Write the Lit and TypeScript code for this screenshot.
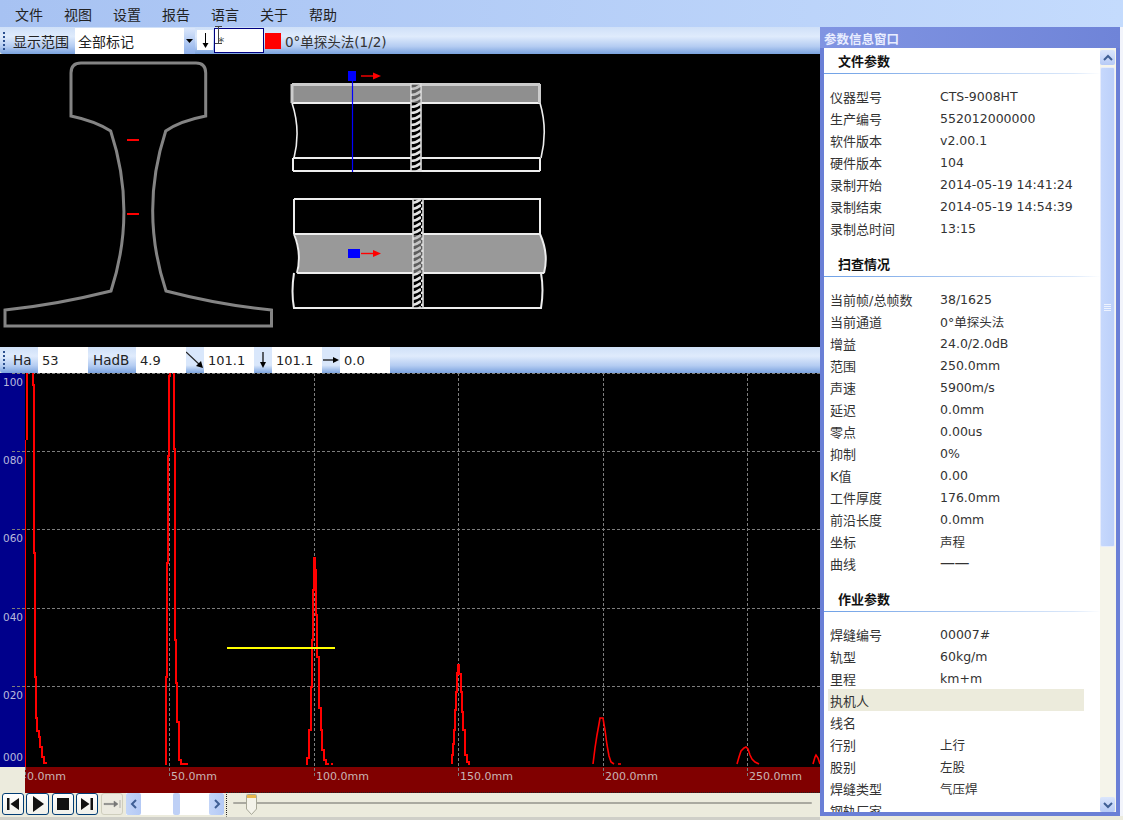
import { css, html, LitElement, svg } from "lit";
import { customElement } from "lit/decorators.js";

type Row = [string, string] | [string, string, boolean];

const MENU = ["文件", "视图", "设置", "报告", "语言", "关于", "帮助"];

const SECTIONS: { title: string; rows: Row[] }[] = [
    {
        title: "文件参数",
        rows: [
            ["仪器型号", "CTS-9008HT"],
            ["生产编号", "552012000000"],
            ["软件版本", "v2.00.1"],
            ["硬件版本", "104"],
            ["录制开始", "2014-05-19 14:41:24"],
            ["录制结束", "2014-05-19 14:54:39"],
            ["录制总时间", "13:15"],
        ],
    },
    {
        title: "扫查情况",
        rows: [
            ["当前帧/总帧数", "38/1625"],
            ["当前通道", "0°单探头法"],
            ["增益", "24.0/2.0dB"],
            ["范围", "250.0mm"],
            ["声速", "5900m/s"],
            ["延迟", "0.0mm"],
            ["零点", "0.00us"],
            ["抑制", "0%"],
            ["K值", "0.00"],
            ["工件厚度", "176.0mm"],
            ["前沿长度", "0.0mm"],
            ["坐标", "声程"],
            ["曲线", "——"],
        ],
    },
    {
        title: "作业参数",
        rows: [
            ["焊缝编号", "00007#"],
            ["轨型", "60kg/m"],
            ["里程", "km+m"],
            ["执机人", "", true],
            ["线名", ""],
            ["行别", "上行"],
            ["股别", "左股"],
            ["焊缝类型", "气压焊"],
            ["钢轨厂家", ""],
        ],
    },
];

const GRID_Y = [373, 451, 529, 608, 686];
const GRID_X = [169, 314, 458, 603, 747];
const Y_LABELS: [string, number][] = [["100", 386], ["080", 464], ["060", 542], ["040", 621], ["020", 699], ["000", 761]];
const X_LABELS: [string, number][] = [["0.0mm", 27], ["50.0mm", 171], ["100.0mm", 316], ["150.0mm", 460], ["200.0mm", 605], ["250.0mm", 749]];

// echo traces, stepped like the device's pixel output
const STEPPED = [
    "M27 373 V440",
    "M33 373 V385 H34 V553 H35 V677 H36 V718 H37 V731 H39 V737 H40 V747 H42 V757 H44 V763 H47",
    "M170 373 V376 H169 V456 H168 V563 H167 V677 H166 V764 H165",
    "M174 373 V449 H175 V640 H176 V683 H177 V722 H179 V760 H181 V764 H188",
    "M314 557 V590 H313 V640 H312 V687 H311 V730 H309 V758 H307 V764 H306",
    "M315 557 V570 H316 V615 H317 V657 H319 V708 H321 V730 H322 V750 H324 V760 H326 V764 H329 M331 764 H333",
    "M458 664 V673 H457 V692 H456 V710 H455 V730 H454 V744 H453 V755 H452 V764",
    "M459 664 V674 H461 V692 H462 V712 H463 V730 H465 V755 H467 V762 H469 V764 H470",
];
const SMOOTH = [
    "593,764 595,748 597,735 599,724 600,718 603,718 605,730 607,745 609,756 611,762 614,764",
    "618,764 621,764",
    "737,764 739,757 741,751 744,748 746,747 748,749 750,755 752,759 755,762 759,764",
    "813,764 815,757 816,755 818,758 820,764",
];

@customElement("app-root")
export class AppRoot extends LitElement {
    private renderPane() {
        return html`
            <svg class="pane" width="820" height="293" viewBox="0 54 820 293">
                <defs>
                    <pattern id="weld" width="10" height="6" patternUnits="userSpaceOnUse" patternTransform="translate(411 84)">
                        <rect width="10" height="6" fill="#000"></rect>
                        <path d="M0 5 Q5 5 10 1" fill="none" stroke="#e4e4e4" stroke-width="2.6"></path>
                    </pattern>
                </defs>
                <path d="M71 116 V73 Q71 63 81 63 H196 Q205.7 63 205.7 73 V116 Q180 121 165.7 131 Q139.5 211 166 291 Q220 305 271.5 310 V326 H5 V310 Q55 305 111 291 Q137 211 110.7 131 Q95 121 71 116 Z" fill="none" stroke="#848484" stroke-width="3"></path>
                <path d="M127 140 H139 M127 214 H139" stroke="#f00" stroke-width="2"></path>

                <rect x="293" y="85" width="246" height="18" fill="#8f8f8f"></rect>
                <path d="M292 103 Q301 130 294 158 M540 103 Q548 130 541 158" fill="none" stroke="#eee" stroke-width="1.6"></path>
                <path d="M292 103 H540 M293 158 H540 M293 171 H540 M293 158 V171 M540 158 V171" fill="none" stroke="#eee" stroke-width="2"></path>
                <path d="M292 84.5 H540 M292 84 V103 M539.5 84 V103" fill="none" stroke="#ccc" stroke-width="3"></path>
                <rect x="411" y="84" width="10" height="87" fill="url(#weld)" stroke="#ddd" stroke-width="1.6"></rect>
                <rect x="412" y="85" width="8" height="18" fill="#aaa" opacity=".55"></rect>
                <rect x="348" y="71" width="8" height="10" fill="#00f"></rect>
                <path d="M352.5 81 V172" stroke="#00f" stroke-width="1.2"></path>
                <path d="M361 76 H375" stroke="#f00" stroke-width="1.4"></path>
                <path d="M373 72.5 L381 76 L373 79.5 Z" fill="#f00"></path>

                <path d="M295 234 Q302 254 298 273 H544 Q549 254 540 234 Z" fill="#999"></path>
                <path d="M294 199 H540 V234 M294 199 V234 M294 234 H541 M297 273 H544 M294 273 Q291 292 294 308 H541 Q544 290 541 273 M294 234 Q302 254 297 273 M540 234 Q549 254 544 273" fill="none" stroke="#eee" stroke-width="2"></path>
                <rect x="413" y="199" width="10" height="109" fill="url(#weld)" stroke="#ddd" stroke-width="1.6"></rect>
                <rect x="414" y="235" width="8" height="38" fill="#aaa" opacity=".55"></rect>
                <rect x="348" y="249" width="12" height="9" fill="#00f"></rect>
                <path d="M361 253.5 H375" stroke="#f00" stroke-width="1.4"></path>
                <path d="M373 250 L381 253.5 L373 257 Z" fill="#f00"></path>
            </svg>
        `;
    }

    private renderChart() {
        return html`
            <svg class="chart" width="820" height="420" viewBox="0 373 820 420">
                <rect x="0" y="373" width="820" height="394" fill="#000"></rect>
                <rect x="0" y="373" width="25" height="394" fill="#00008b"></rect>
                <rect x="0" y="767" width="25" height="26" fill="#ecebdd"></rect>
                <rect x="25" y="767" width="795" height="26" fill="#800000"></rect>
                ${GRID_Y.map((y) => svg`<line x1="12" x2="820" y1=${y + 0.5} y2=${y + 0.5} class="grid"></line>`)}
                ${GRID_X.map((x) => svg`<line x1=${x + 0.5} x2=${x + 0.5} y1="373" y2="778" class="grid"></line>`)}
                <line x1="25.5" x2="25.5" y1="767" y2="778" class="grid"></line>
                <line x1="25.5" x2="25.5" y1="440" y2="767" stroke="#f00"></line>
                ${STEPPED.map((d) => svg`<path d=${d} class="trace"></path>`)}
                ${SMOOTH.map((p) => svg`<polyline points=${p} class="soft"></polyline>`)}
                <line x1="227" x2="335" y1="648" y2="648" stroke="#ff0" stroke-width="2"></line>
                ${Y_LABELS.map(([t, y]) => svg`<text x="3" y=${y} class="ylabel">${t}</text>`)}
                ${X_LABELS.map(([t, x]) => svg`<text x=${x} y="780" class="xlabel">${t}</text>`)}
            </svg>
        `;
    }

    private renderPlayer() {
        return html`
            <div class="player">
                <button class="btn">
                    <svg width="14" height="14" viewBox="0 0 14 14"><path d="M1 1 H3.5 V13 H1 Z M13 1 V13 L4.5 7 Z"></path></svg>
                </button>
                <button class="btn wide">
                    <svg width="14" height="16" viewBox="0 0 14 16"><path d="M2 0 L13 8 L2 16 Z"></path></svg>
                </button>
                <button class="btn stop">
                    <svg width="12" height="12" viewBox="0 0 12 12"><rect width="12" height="12"></rect></svg>
                </button>
                <button class="btn">
                    <svg width="14" height="14" viewBox="0 0 14 14"><path d="M1 1 L9.5 7 L1 13 Z M10.5 1 H13 V13 H10.5 Z"></path></svg>
                </button>
                <button class="btn off">
                    <svg width="18" height="10" viewBox="0 0 18 10"><path d="M1 4.4 H11 V2 L15 5 L11 8 V5.6 H1 Z M17 1 V9" fill="#777" stroke="#777" stroke-width=".5"></path></svg>
                </button>
                <div class="hscroll">
                    <span class="arrow">
                        <svg width="8" height="10" viewBox="0 0 8 10"><path d="M6 1 L2 5 L6 9" fill="none" stroke="#3f5f95" stroke-width="2"></path></svg>
                    </span>
                    <span class="hthumb"></span>
                    <span class="arrow end">
                        <svg width="8" height="10" viewBox="0 0 8 10"><path d="M2 1 L6 5 L2 9" fill="none" stroke="#3f5f95" stroke-width="2"></path></svg>
                    </span>
                </div>
                <div class="track">
                    <div class="groove"></div>
                    <svg class="knob" width="11" height="21" viewBox="0 0 11 21">
                        <path d="M.5 1.5 Q.5 .5 1.5 .5 H9.5 Q10.5 .5 10.5 1.5 V15 L5.5 20.5 L.5 15 Z" fill="#f4f3ea" stroke="#a8a898"></path>
                        <path d="M1 1 H10 V4 H1 Z" fill="#e8b64c"></path>
                    </svg>
                </div>
            </div>
        `;
    }

    private renderPanel() {
        return html`
            <aside class="panel">
                <div class="title">参数信息窗口</div>
                <div class="body">
                    <div class="list">
                        ${SECTIONS.map((s) => html`
                            <div class="head">${s.title}</div>
                            <div class="rows">
                                ${s.rows.map((r) => html`
                                    <div class="row ${r[2] ? "hl" : ""}">
                                        <span class="key">${r[0]}</span><span class="${r[1] === "——" ? "dash" : ""}">${r[1]}</span>
                                    </div>
                                `)}
                            </div>
                        `)}
                    </div>
                    <div class="vscroll">
                        <span class="vbtn">
                            <svg width="10" height="8" viewBox="0 0 10 8"><path d="M1 6 L5 2 L9 6" fill="none" stroke="#3f5f95" stroke-width="2"></path></svg>
                        </span>
                        <span class="vthumb">
                            <i></i><i></i><i></i><i></i>
                        </span>
                        <span class="vrest"></span>
                        <span class="vbtn">
                            <svg width="10" height="8" viewBox="0 0 10 8"><path d="M1 2 L5 6 L9 2" fill="none" stroke="#3f5f95" stroke-width="2"></path></svg>
                        </span>
                    </div>
                </div>
            </aside>
        `;
    }

    render() {
        return html`
            <nav class="menu">${MENU.map((m) => html`<span>${m}</span>`)}</nav>
            <div class="main">
                <section class="left">
                    <div class="strip">
                        <span class="grip"></span>
                        <span class="cap">显示范围</span>
                        <div class="combo">
                            <span>全部标记</span>
                            <span class="drop"><svg width="7" height="4" viewBox="0 0 7 4"><path d="M0 0 H7 L3.5 4 Z"></path></svg></span>
                        </div>
                        <span class="icon-white">
                            <svg width="9" height="15" viewBox="0 0 9 15"><path d="M4.5 0 V10" stroke="#000"></path><path d="M1.5 10 H7.5 L4.5 15 Z"></path></svg>
                        </span>
                        <div class="mark">
                            <span>*</span>
                            <svg class="beam" width="7" height="18" viewBox="0 0 7 18"><path d="M0 .5 H7 M3.5 .5 V17.5 M0 17.5 H7" fill="none" stroke="#444" stroke-width="1"></path></svg>
                        </div>
                        <span class="swatch"></span>
                        <span class="channel">0°单探头法(1/2)</span>
                    </div>
                    ${this.renderPane()}
                    <div class="strip second">
                        <span class="grip"></span>
                        <span class="cap ha">Ha</span>
                        <span class="field">53</span>
                        <span class="cap hadb">HadB</span>
                        <span class="field">4.9</span>
                        <span class="tool">
                            <svg width="18" height="18" viewBox="0 0 18 18"><path d="M0 1 L15 15" stroke="#222" stroke-width="1.2"></path><path d="M10 15 L17 17 L15 10 Z"></path></svg>
                        </span>
                        <span class="field">101.1</span>
                        <span class="tool">
                            <svg width="10" height="16" viewBox="0 0 10 16"><path d="M5 0 V11" stroke="#000" stroke-width="1.2"></path><path d="M2 10 H8 L5 16 Z"></path></svg>
                        </span>
                        <span class="field">101.1</span>
                        <span class="tool">
                            <svg width="16" height="10" viewBox="0 0 16 10"><path d="M0 5 H11" stroke="#000" stroke-width="1.2"></path><path d="M10 2 V8 L16 5 Z"></path></svg>
                        </span>
                        <span class="field">0.0</span>
                    </div>
                    ${this.renderChart()}
                    ${this.renderPlayer()}
                    <div class="foot"></div>
                </section>
                ${this.renderPanel()}
                <div class="edge"></div>
            </div>
        `;
    }

    static styles = css`
        :host {
            display: block;
            width: 1123px;
            height: 820px;
            overflow: hidden;
            background: #ecebdd;
            color: #222;
            font-family: "DejaVu Sans", "Noto Sans CJK SC", sans-serif;
            font-size: 12.5px;
        }
        svg {
            display: block;
        }
        .menu {
            display: flex;
            align-items: center;
            gap: 21px;
            height: 27px;
            padding-left: 15px;
            box-sizing: border-box;
            background: linear-gradient(90deg, #a7c2f2, #c4dbfd);
            font-size: 14px;
            font-family: "Noto Sans CJK SC", sans-serif;
        }
        .main {
            display: flex;
            height: 793px;
        }
        .left {
            width: 820px;
            display: flex;
            flex-direction: column;
            flex: none;
        }
        .strip {
            position: relative;
            display: flex;
            align-items: stretch;
            height: 27px;
            box-sizing: border-box;
            padding: 1px 0 0 0;
            background: linear-gradient(#cfe0f8 0, #dfebfc 35%, #b4ccf2 72%, #7aa2de 100%);
            border-bottom-left-radius: 3px;
            flex: none;
        }
        .second {
            height: 26px;
            padding-top: 0;
        }
        .grip {
            align-self: center;
            width: 2px;
            height: 18px;
            margin: 0 8px 0 3px;
            background: repeating-linear-gradient(#2b4f8f 0 2px, transparent 2px 4px);
        }
        .cap {
            display: flex;
            align-items: center;
            font-size: 14px;
            font-family: "Noto Sans CJK SC", sans-serif;
            width: 62px;
        }
        .combo {
            display: flex;
            align-items: center;
            justify-content: space-between;
            width: 120px;
            background: #fff;
            padding-left: 3px;
            box-sizing: border-box;
            font-family: "Noto Sans CJK SC", sans-serif;
            font-size: 14px;
        }
        .drop {
            display: flex;
            align-items: center;
            justify-content: center;
            width: 11px;
            height: 100%;
            background: linear-gradient(#dbe7fb, #8eb0ea);
        }
        .icon-white {
            display: flex;
            align-items: center;
            justify-content: center;
            width: 16px;
            height: 20px;
            margin: 2px 1px 0 2px;
            background: #fff;
        }
        .mark {
            position: relative;
            width: 50px;
            height: 25px;
            box-sizing: border-box;
            border: 1px solid #000080;
            background: #fff;
            padding: 4px 0 0 3px;
            line-height: 18px;
            color: #555;
        }
        .beam {
            position: absolute;
            left: 0;
            top: -3px;
        }
        .swatch {
            align-self: center;
            width: 16px;
            height: 16px;
            margin: 0 4px 0 1px;
            background: #f00;
        }
        .channel {
            align-self: center;
            font-size: 13.5px;
            color: #333;
        }
        .ha {
            width: 25px;
            font-family: "DejaVu Sans", sans-serif;
            font-size: 13.5px;
        }
        .hadb {
            width: 48px;
            padding-left: 5px;
            box-sizing: border-box;
            font-family: "DejaVu Sans", sans-serif;
            font-size: 13.5px;
        }
        .field {
            display: flex;
            align-items: center;
            width: 50px;
            padding-left: 4px;
            box-sizing: border-box;
            background: #fff;
            color: #222;
            font-size: 13px;
        }
        .tool {
            display: flex;
            align-items: center;
            justify-content: center;
            width: 18px;
            background: linear-gradient(#d9e7fb, #d9e7fb 70%, #7ea5e0);
        }
        .pane {
            background: #000;
            flex: none;
        }
        .chart {
            flex: none;
        }
        .grid {
            stroke: #7d7d7d;
            stroke-width: 1;
            stroke-dasharray: 3 2;
        }
        .trace {
            fill: none;
            stroke: #f00;
            stroke-width: 2;
            shape-rendering: crispEdges;
        }
        .soft {
            fill: none;
            stroke: #f00;
            stroke-width: 1.6;
        }
        .ylabel {
            fill: #b8b8dc;
            font-size: 10.5px;
        }
        .xlabel {
            fill: #c9b4b4;
            font-size: 11px;
        }
        .player {
            display: flex;
            height: 24px;
            padding-left: 2px;
            gap: 2px;
            box-sizing: border-box;
            background: #ecebdd;
            flex: none;
        }
        .btn {
            display: flex;
            align-items: center;
            justify-content: center;
            width: 22px;
            height: 22px;
            padding: 0;
            box-sizing: border-box;
            border: 1px solid #003c74;
            border-radius: 3px;
            background: linear-gradient(#fff, #f0f0ea);
        }
        .btn.wide {
            width: 23px;
        }
        .btn.stop {
            margin-left: 1px;
        }
        .btn svg {
            fill: #111;
        }
        .btn.off {
            border-color: #cfcebd;
            background: #eceae0;
            margin-left: 1px;
        }
        .hscroll {
            display: flex;
            width: 98px;
            height: 22px;
            margin-left: 1px;
            background: #fff;
        }
        .arrow {
            display: flex;
            align-items: center;
            justify-content: center;
            width: 15px;
            background: linear-gradient(90deg, #c3d5f8, #b4c9f5);
            border-radius: 2px;
            flex: none;
        }
        .arrow.end {
            margin-left: auto;
        }
        .hthumb {
            width: 7px;
            margin-left: 32px;
            background: #bed0f6;
            border-radius: 2px;
        }
        .track {
            position: relative;
            flex: 1;
            height: 25px;
            margin: -1px 0 0 0;
            box-sizing: border-box;
            border: 1px dotted #222;
            border-bottom-color: #ecebdd;
            border-right: none;
        }
        .groove {
            position: absolute;
            left: 6px;
            right: 8px;
            top: 9px;
            height: 2px;
            background: #aaa9a0;
            border-radius: 1px;
        }
        .knob {
            position: absolute;
            left: 19px;
            top: 1px;
        }
        .foot {
            height: 3px;
            background: #cfcfc8;
            flex: none;
        }
        .panel {
            width: 300px;
            height: 789px;
            flex: none;
            display: flex;
            flex-direction: column;
            box-sizing: border-box;
            background: #6a7fd6;
            padding: 0 4px 4px 4px;
        }
        .title {
            height: 21px;
            line-height: 24px;
            margin: 0 -4px;
            padding-left: 4px;
            flex: none;
            color: #e8edff;
            font-weight: 700;
            font-size: 12.5px;
            font-family: "Noto Sans CJK SC", sans-serif;
            background: linear-gradient(90deg, #8094e2, #6f84d8);
        }
        .body {
            flex: 1;
            display: flex;
            overflow: hidden;
            background: #fff;
        }
        .list {
            width: 276px;
            flex: none;
            overflow: hidden;
        }
        .head {
            height: 26px;
            line-height: 26px;
            box-sizing: border-box;
            padding-left: 14px;
            font-weight: 700;
            font-size: 13px;
            font-family: "Noto Sans CJK SC", sans-serif;
            color: #111;
            border-bottom: 1px solid;
            border-image: linear-gradient(90deg, #6ea0e6, #dbe8fa 90%, #fff) 1;
        }
        .rows {
            padding: 11px 0 12px 0;
        }
        .row {
            display: flex;
            align-items: center;
            width: 256px;
            height: 22px;
            margin-left: 4px;
            padding-left: 2px;
            box-sizing: border-box;
            color: #333;
            white-space: nowrap;
        }
        .row.hl {
            background: #ecebdc;
        }
        .key {
            width: 110px;
            flex: none;
            font-size: 13px;
        }
        .dash {
            font-size: 15px;
            letter-spacing: -0.5px;
        }
        .vscroll {
            width: 16px;
            flex: none;
            display: flex;
            flex-direction: column;
            align-items: flex-start;
            padding-top: 2px;
            box-sizing: border-box;
            background: #f5f4ea;
        }
        .vbtn {
            display: flex;
            align-items: center;
            justify-content: center;
            width: 15px;
            height: 15px;
            flex: none;
            background: linear-gradient(#dbe6fc, #b6caf6);
            border-radius: 2px;
        }
        .vthumb {
            display: flex;
            flex-direction: column;
            align-items: center;
            justify-content: center;
            gap: 1px;
            width: 15px;
            height: 480px;
            margin-top: 2px;
            flex: none;
            box-sizing: border-box;
            border: 1px solid #e6ecfb;
            background: linear-gradient(90deg, #c6d8fc, #bcd0fa);
            border-radius: 2px;
        }
        .vthumb i {
            width: 7px;
            height: 1px;
            background: #eef3fe;
        }
        .vrest {
            flex: 1;
        }
        .edge {
            flex: 1;
            height: 789px;
            background: #f2f4fb;
        }
    `;
}

declare global {
    interface HTMLElementTagNameMap {
        "app-root": AppRoot;
    }
}
